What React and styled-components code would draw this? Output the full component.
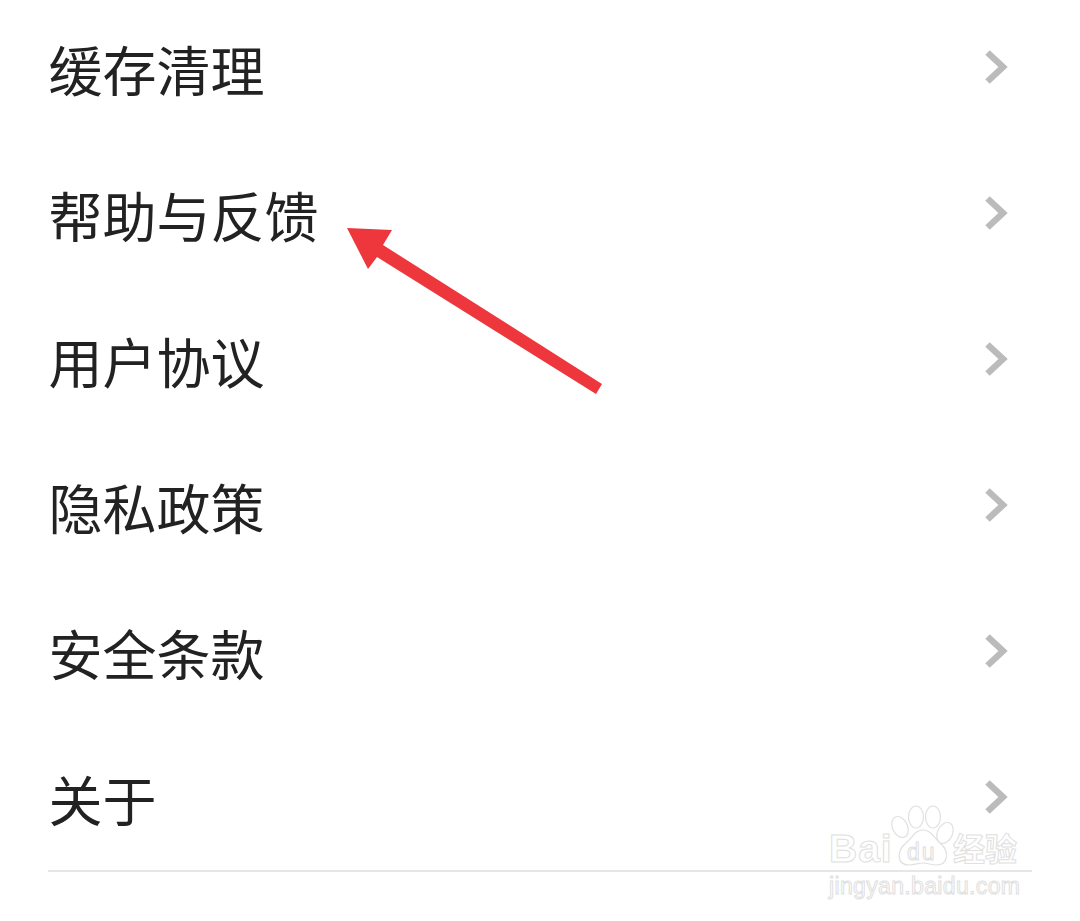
import React from "react";
import styled, { createGlobalStyle } from "styled-components";

const Global = createGlobalStyle`
  html, body { margin: 0; padding: 0; background: #fff; }
  body { font-family: "Noto Sans CJK SC", "Liberation Sans", sans-serif; }
`;

const Page = styled.div`
  position: relative;
  width: 1080px;
  height: 921px;
  overflow: hidden;
  background: #fff;
`;

const List = styled.ul`
  list-style: none;
  margin: -6px 0 0;
  padding: 0 72px 0 48.5px;
  display: flex;
  flex-direction: column;
`;

const Row = styled.li`
  height: 146px;
  display: flex;
  align-items: center;
  justify-content: space-between;
`;

const Label = styled.span`
  font-size: 54px;
  line-height: 1;
  color: #222;
  font-weight: 400;
  position: relative;
  top: 1.5px;
`;

const Chevron = styled.svg`
  width: 24px;
  height: 36px;
  flex: none;
`;

const Divider = styled.div`
  height: 2px;
  margin: 0 48px;
  background: #e6e6e6;
`;

const ArrowOverlay = styled.svg`
  position: absolute;
  left: 0;
  top: 0;
  width: 1080px;
  height: 921px;
  pointer-events: none;
`;

const Watermark = styled.div`
  position: absolute;
  left: 829px;
  top: 804px;
  width: 200px;
  height: 96px;
  pointer-events: none;
`;

const outline = `
  color: #fff;
  -webkit-text-stroke: 1px #e0e0e0;
  font-family: "Liberation Sans", sans-serif;
  position: absolute;
  line-height: 1;
  white-space: nowrap;
`;

const Bai = styled.span`
  ${outline}
  left: 0;
  top: 25px;
  font-size: 39px;
  font-weight: 700;
  letter-spacing: 1px;
`;

const Jing = styled.span`
  ${outline}
  font-family: "Noto Sans CJK SC", sans-serif;
  left: 124px;
  top: 27px;
  font-size: 32px;
  font-weight: 700;
`;

const Domain = styled.span`
  ${outline}
  left: 0;
  top: 71px;
  font-size: 23px;
  letter-spacing: 0.35px;
`;

const Paw = styled.svg`
  position: absolute;
  left: 60px;
  top: 0;
  width: 72px;
  height: 68px;
`;

const DuText = styled.span`
  ${outline}
  left: 78px;
  top: 37px;
  font-size: 23px;
  letter-spacing: 2px;
`;

const rows = ["缓存清理", "帮助与反馈", "用户协议", "隐私政策", "安全条款", "关于"];

export default function App() {
  return (
    <Page>
      <Global />
      <List>
        {rows.map((t) => (
          <Row key={t}>
            <Label>{t}</Label>
            <Chevron viewBox="0 0 24 36">
              <path d="M3.5 3.5 L19 18 L3.5 32.5" fill="none" stroke="#bbbbbb" strokeWidth="6.5" />
            </Chevron>
          </Row>
        ))}
      </List>
      <Divider />
      <ArrowOverlay viewBox="0 0 1080 921">
        <polygon
          points="347,228 392,230 383,245 602,384 596,394 377,257 368,269"
          fill="#ee373c"
        />
      </ArrowOverlay>
      <Watermark>
        <Paw viewBox="0 0 72 68" fill="#fff" stroke="#e0e0e0" strokeWidth="1.2">
          <ellipse cx="11" cy="23" rx="7.5" ry="11" transform="rotate(-25 11 23)" />
          <ellipse cx="27" cy="13" rx="7.5" ry="11" />
          <ellipse cx="44" cy="13" rx="7.5" ry="11" />
          <ellipse cx="56" cy="29" rx="7.5" ry="11" transform="rotate(25 56 29)" />
          <path d="M34 26 C26 26 24 33 17 39 C8 46 7 61 20 61 C26 61 29 59 34 59 C39 59 42 61 47 61 C60 61 60 47 52 40 C45 34 42 26 34 26 Z" />
        </Paw>
        <Bai>Bai</Bai>
        <DuText>du</DuText>
        <Jing>经验</Jing>
        <Domain>jingyan.baidu.com</Domain>
      </Watermark>
    </Page>
  );
}
